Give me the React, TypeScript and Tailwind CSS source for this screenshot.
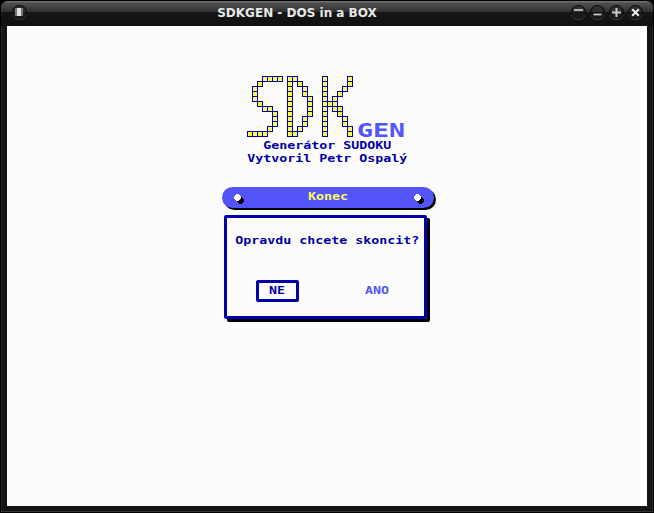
import type { ReactNode } from "react";

// Each row of the logo lists its lit columns; cells sit on a 5px pitch.
const LOGO_ROWS: number[][] = [
  [3, 4, 5, 6, 8, 9, 15, 20],
  [2, 8, 10, 15, 20],
  [1, 8, 11, 15, 19],
  [1, 8, 11, 15, 18],
  [1, 8, 12, 15, 17],
  [2, 8, 12, 15, 16, 17],
  [3, 4, 8, 12, 15, 17, 18],
  [5, 8, 12, 15, 18],
  [5, 8, 11, 15, 19],
  [5, 8, 11, 15, 19],
  [4, 8, 10, 15, 20],
  [0, 1, 2, 3, 8, 9, 15, 20],
];

function Logo() {
  return (
    <svg width="106" height="61" viewBox="0 0 106 61" shapeRendering="crispEdges" className="block shrink-0">
      {LOGO_ROWS.map((cols, r) =>
        cols.map((c) => (
          <g key={`${r}-${c}`}>
            <rect x={c * 5} y={r * 5} width="6" height="6" fill="#0000a8" />
            <rect x={c * 5 + 1} y={r * 5 + 1} width="4" height="4" fill="#fcfc54" />
          </g>
        )),
      )}
    </svg>
  );
}

function DosText({ children, className = "" }: { children: ReactNode; className?: string }) {
  return (
    <span
      className={`block origin-center scale-x-[1.329] font-['DejaVu_Sans_Mono',monospace] text-[10px] leading-[13px] font-bold whitespace-pre ${className}`}
    >
      {children}
    </span>
  );
}

function TitleButton({ children }: { children: ReactNode }) {
  return (
    <svg width="17" height="17" viewBox="0 0 17 17" className="block">
      <circle cx="8.5" cy="8.5" r="7" fill="#191919" stroke="#0a0a0a" strokeWidth="1" />
      <path d="M1.6 10.5a7.2 7.2 0 0 0 13.8 0" fill="none" stroke="#484848" strokeWidth="0.8" />
      <path d="M2.5 8a6 6 0 0 1 12 0z" fill="#303030" />
      {children}
    </svg>
  );
}

function Screw() {
  return (
    <svg width="11" height="11" viewBox="0 0 11 11" shapeRendering="crispEdges" className="block">
      <path d="M6 3h2v1h1v1h1v3h-1v1h-1v1h-3v-1h-1v-1h-1v-2z" fill="#000" />
      <path d="M2 0h3v1h1v1h1v3h-1v1h-1v1h-3v-1h-1v-1h-1v-3h1v-1h1z" fill="#fcfcfc" />
    </svg>
  );
}

export default function App() {
  return (
    <div className="flex h-[513px] w-[654px] flex-col overflow-hidden bg-black">
      <div className="flex h-full flex-col rounded-t-[7px] border-x border-b border-black bg-[#141414] shadow-[inset_1px_0_0_#2a2a2a,inset_-1px_0_0_#2a2a2a]">
        <header className="grid h-[26px] shrink-0 grid-cols-[1fr_auto_1fr] rounded-t-[7px] border-t border-black bg-[linear-gradient(#7a7a7a_0px,#505050_2px,#303030_11px,#151515_11px,#111111_25px)] px-[10px] pt-[3px]">
          <TitleButton>
            <rect x="4" y="4" width="8" height="8" fill="#777" />
            <rect x="6" y="4" width="4" height="8" fill="#e0e0e0" />
          </TitleButton>
          <h1 className="relative -left-[30px] font-['DejaVu_Sans',sans-serif] text-[12px] leading-[18px] font-bold whitespace-nowrap text-[#e8e8e8]">
            SDKGEN - DOS in a BOX
          </h1>
          <div className="-mr-px flex justify-end gap-[2px]">
            <TitleButton><path d="M4 6h9" stroke="#ddd" strokeWidth="1.5" /></TitleButton>
            <TitleButton><path d="M4.5 10.5h8" stroke="#ccc" strokeWidth="1.7" /></TitleButton>
            <TitleButton><path d="M4 8.5h9M8.5 4v9" stroke="#ccc" strokeWidth="2" /></TitleButton>
            <TitleButton><path d="M5.2 5.2l6.6 6.6M11.8 5.2l-6.6 6.6" stroke="#eee" strokeWidth="2" /></TitleButton>
          </div>
        </header>

        <main className="mx-[6px] flex h-[480px] shrink-0 flex-col bg-[#fcfcfc] text-[#0000a8]">
          <div className="mt-[50px] ml-[240px] flex h-[61px] items-end">
            <Logo />
            <span className="ml-[4px] origin-left scale-x-[1.4] font-['DejaVu_Sans_Mono',monospace] text-[19px] leading-[13px] font-bold text-[#5454fc]">
              GEN
            </span>
          </div>
          <div className="mt-[2px] flex w-[640px] flex-col items-center">
            <DosText>Generátor SUDOKU</DosText>
            <DosText>Vytvoril Petr Ospalý</DosText>
          </div>

          <div className="mt-[22px] ml-[215px] flex h-[21px] w-[212px] items-center justify-between rounded-full bg-[#5454fc] pr-[9px] pl-[12px] shadow-[2px_2px_0_#000]">
            <div className="pt-[3px]"><Screw /></div>
            <DosText className="mt-[-2px] mr-[2px] text-[#fcfc54]">Konec</DosText>
            <div className="pt-[3px]"><Screw /></div>
          </div>

          <section className="mt-[7px] ml-[217px] flex h-[104px] w-[203px] flex-col rounded-[2px] border-[3px] border-[#0000a8] shadow-[3px_3px_0_#000]">
            <div className="mt-[16px] ml-[3px] flex justify-center">
              <DosText>Opravdu chcete skoncit?</DosText>
            </div>
            <div className="mt-[33px] flex items-center">
              <button className="ml-[29px] flex h-[22px] w-[43px] items-center justify-center rounded-[2px] border-[3px] border-[#0000a8]">
                <DosText className="-mt-px">NE</DosText>
              </button>
              <button className="ml-[69px] text-[#5454fc]">
                <DosText className="-mt-px">ANO</DosText>
              </button>
            </div>
          </section>
        </main>
        <footer className="flex grow flex-col justify-end">
          <div className="h-px bg-[#333]" />
        </footer>
      </div>
    </div>
  );
}
